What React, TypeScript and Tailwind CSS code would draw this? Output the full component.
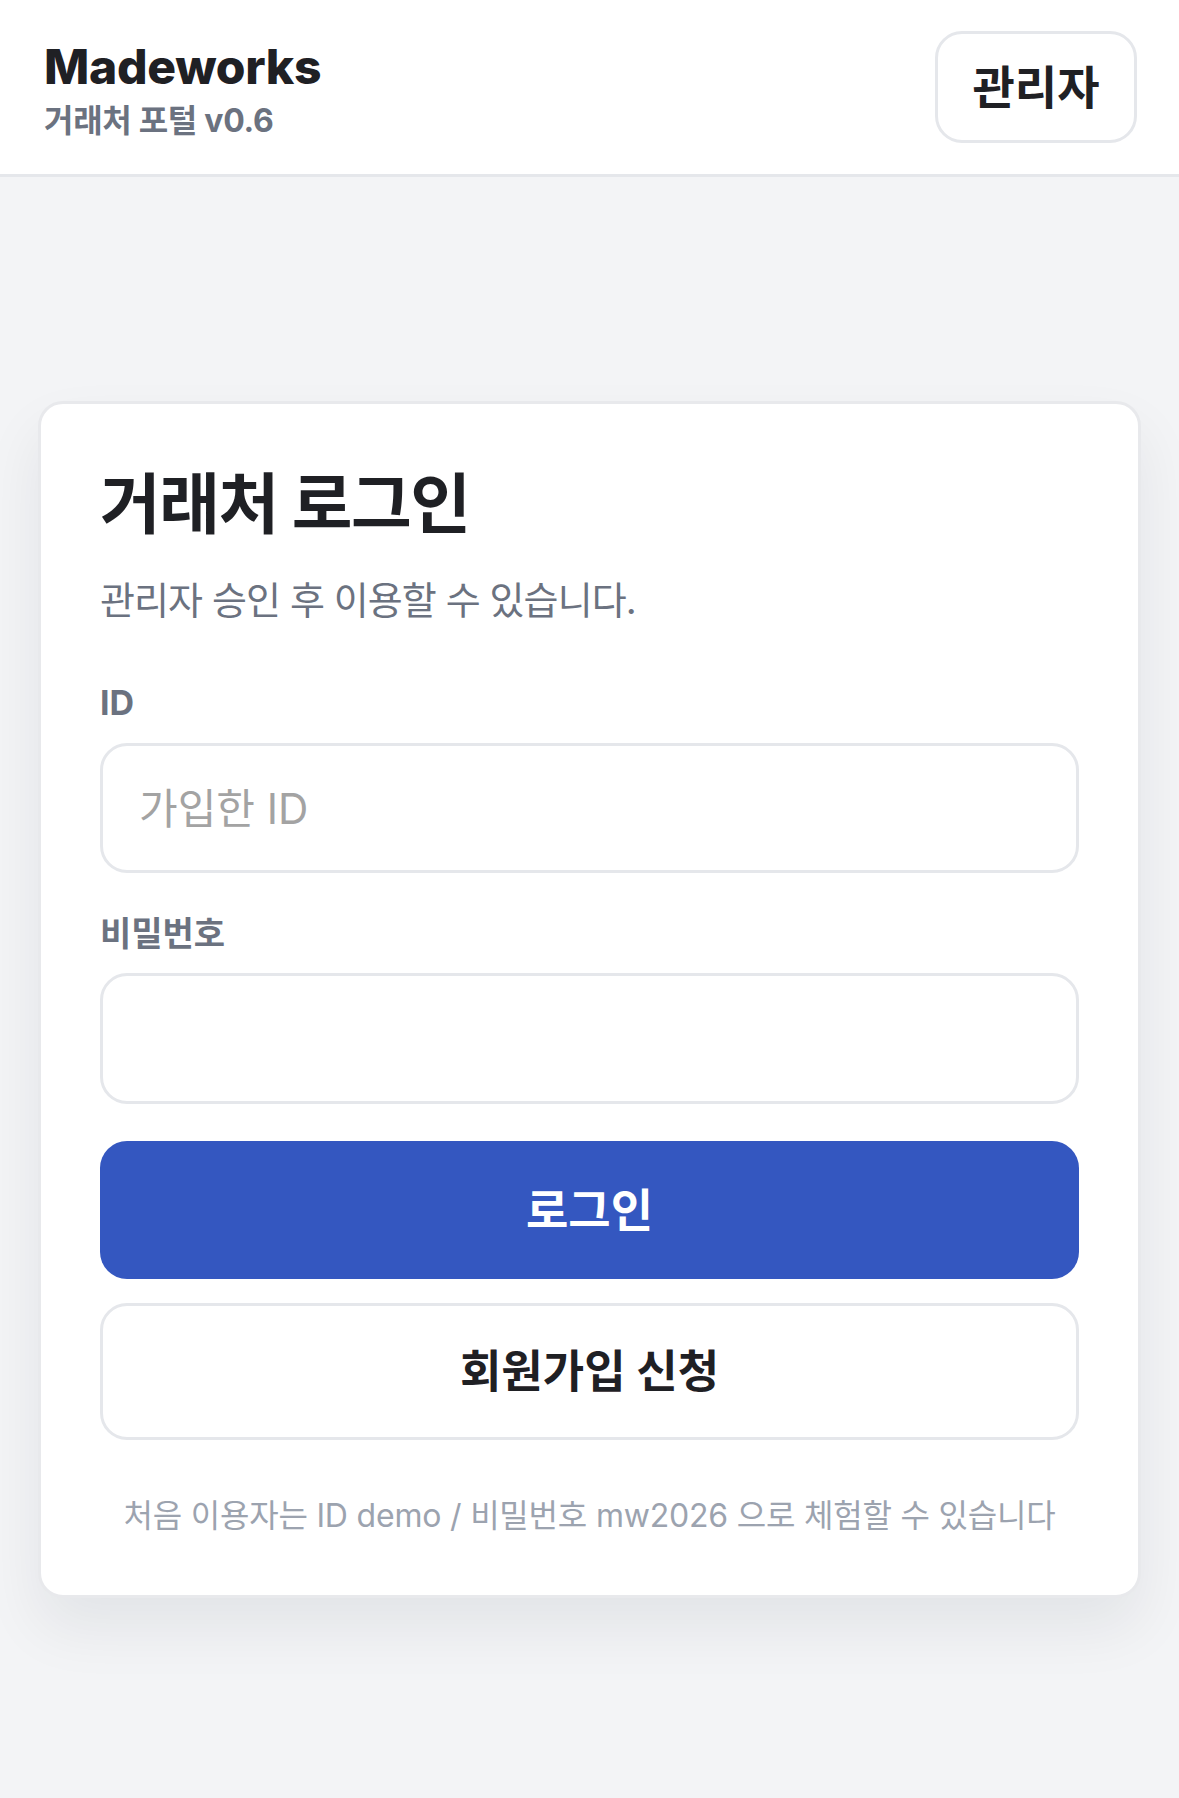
import React from "react";

const FONT = 'Inter, "Noto Sans CJK KR", "Noto Sans", sans-serif';

export default function App() {
  return (
    <div
      className="min-h-[1798px] w-full bg-[#f3f4f6] text-[#1f2024]"
      style={{ fontFamily: FONT }}
    >
      <header className="flex h-[177px] items-center justify-between border-b-[3px] border-[#e5e7eb] bg-white pl-[44px] pr-[42px]">
        <div className="flex flex-col pt-[6px]">
          <div className="text-[48px] font-extrabold leading-[52px] tracking-[-0.3px] text-[#1f2024]">
            Madeworks
          </div>
          <div className="mt-[10px] text-[32px] font-bold leading-[36px] tracking-[-0.3px] text-[#6b7280]">
            거래처 포털 v0.6
          </div>
        </div>
        <button className="flex h-[112px] w-[202px] items-center justify-center rounded-[27px] border-[3px] border-[#e5e7eb] bg-white text-[46px] font-bold leading-none text-[#1f2024]">
          관리자
        </button>
      </header>

      <main className="px-[38px] pt-[224px]">
        <section className="flex flex-col rounded-[25px] border-[3px] border-[#e8e9ec] bg-white px-[59px] pt-[67px] pb-[59px] shadow-[0_30px_60px_rgba(17,24,39,0.07)]">
          <h1 className="text-[66px] font-bold leading-[66px] tracking-[-1.5px] text-[#1f2024]">
            거래처 로그인
          </h1>
          <p className="mt-[43px] text-[38px] leading-[40px] tracking-[-0.9px] text-[#6b7280]">
            관리자 승인 후 이용할 수 있습니다.
          </p>

          <label className="mt-[63px] text-[34px] font-bold leading-[40px] text-[#6b7280]">
            ID
          </label>
          <input
            type="text"
            placeholder="가입한 ID"
            className="mt-[20px] h-[130px] w-full rounded-[27px] border-[3px] border-[#e5e7eb] bg-white px-[36px] text-[42px] text-[#1f2024] outline-none placeholder:text-[#a3a3a3]"
            style={{ fontFamily: FONT }}
          />

          <label className="mt-[41px] text-[34px] font-bold leading-[40px] text-[#6b7280]">
            비밀번호
          </label>
          <input
            type="password"
            className="mt-[19px] h-[131px] w-full rounded-[27px] border-[3px] border-[#e5e7eb] bg-white px-[36px] text-[42px] outline-none"
          />

          <button className="mt-[37px] flex h-[138px] w-full items-center justify-center rounded-[27px] bg-[#3457c0] text-[46px] font-bold leading-none text-white">
            로그인
          </button>
          <button className="mt-[24px] flex h-[137px] w-full items-center justify-center rounded-[27px] border-[3px] border-[#e5e7eb] bg-white text-[45px] font-bold leading-none text-[#1f2024]">
            회원가입 신청
          </button>

          <p className="mt-[56px] text-center text-[32px] leading-[40px] tracking-[-0.2px] text-[#9ca3af]">
            처음 이용자는 ID demo / 비밀번호 mw2026 으로 체험할 수 있습니다
          </p>
        </section>
      </main>
    </div>
  );
}
